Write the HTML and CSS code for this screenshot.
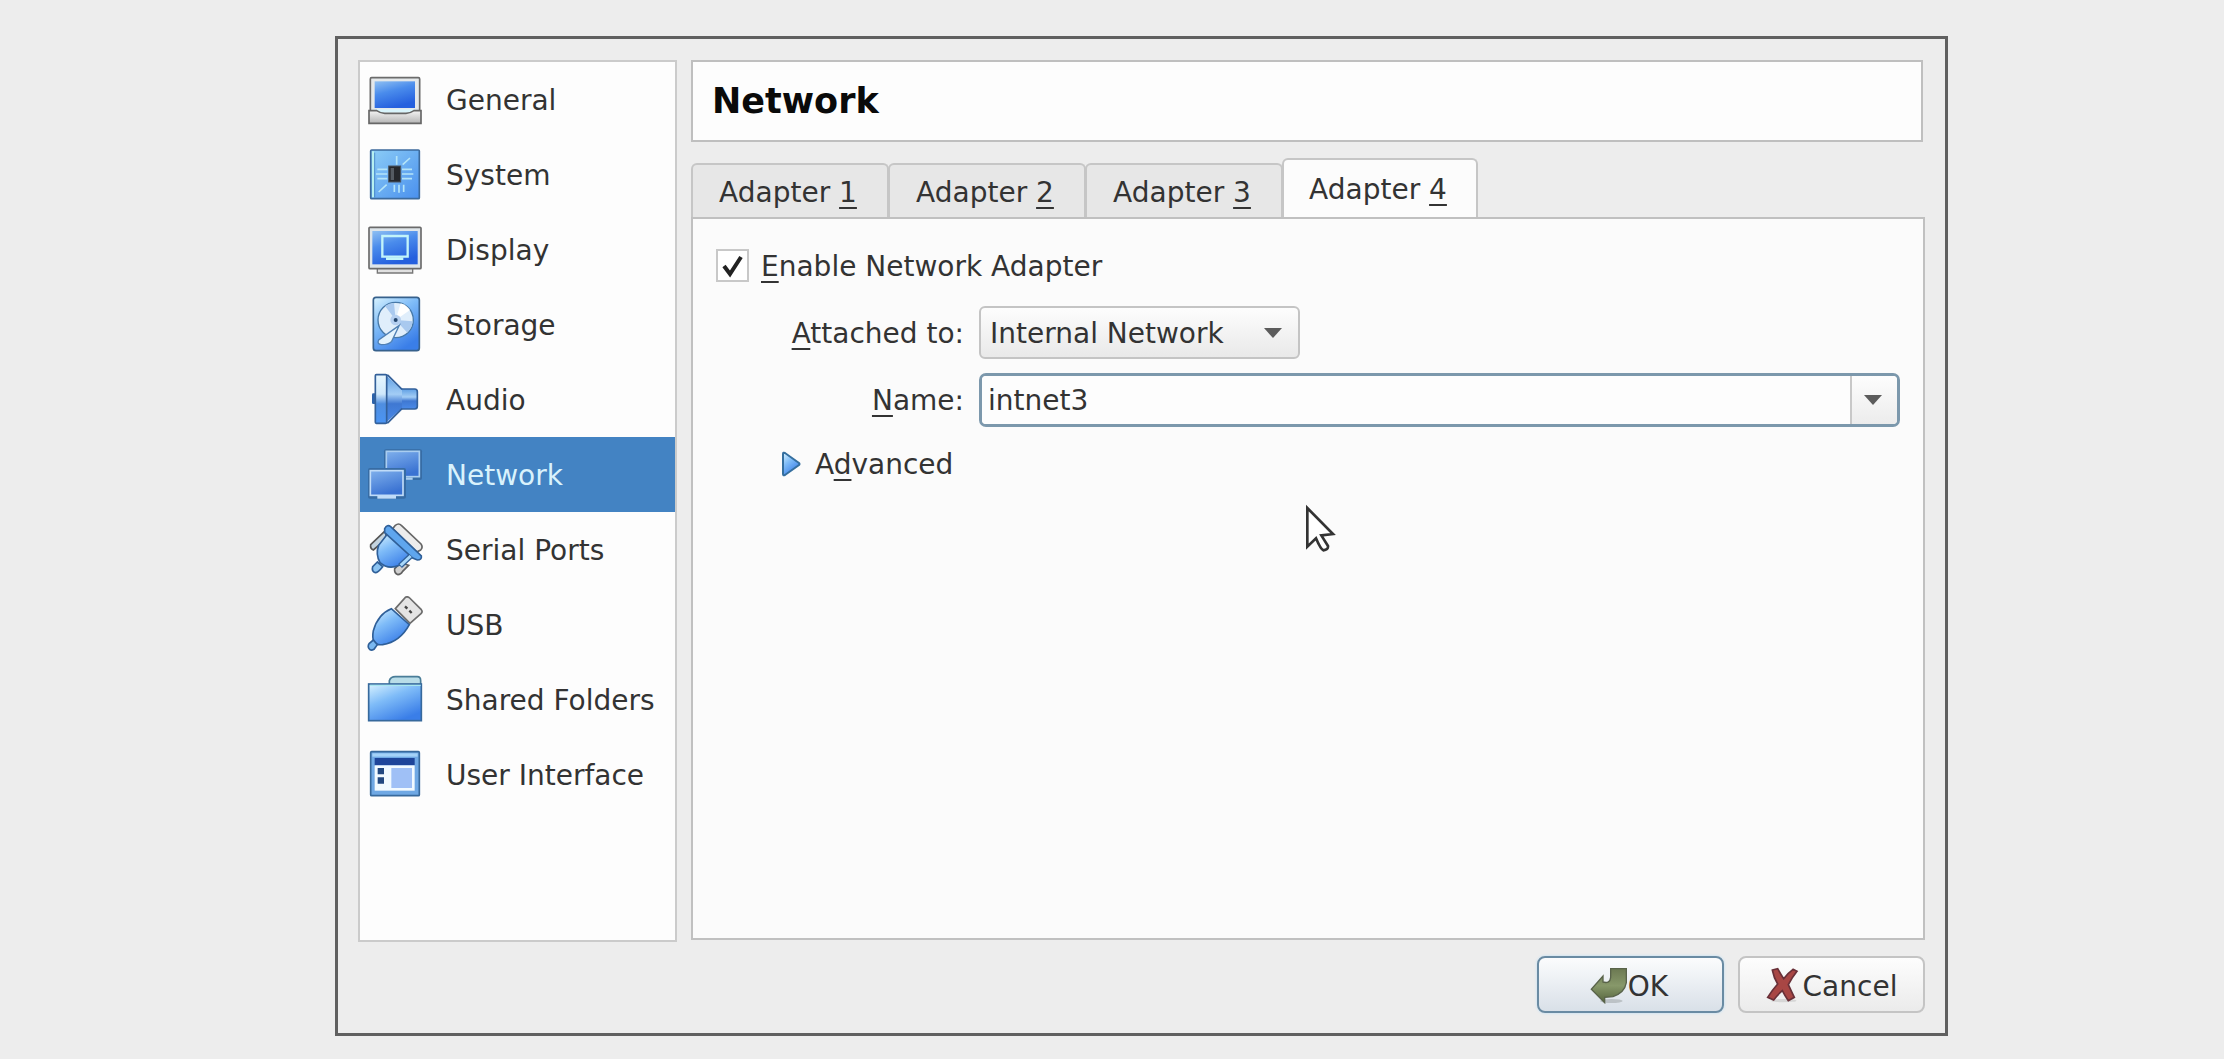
FILE: index.html
```html
<!DOCTYPE html>
<html lang="en">
<head>
<meta charset="utf-8">
<title>Network settings</title>
<link rel="stylesheet" href="styles.css">
</head>
<body>
<svg class="defs" width="0" height="0" aria-hidden="true">
  <defs>
    <linearGradient id="screen" x1="0" y1="0" x2="0.4" y2="1"><stop offset="0" stop-color="#8fc0f2"/><stop offset="0.45" stop-color="#4a8cec"/><stop offset="1" stop-color="#2560de"/></linearGradient>
    <linearGradient id="muted-screen" x1="0" y1="0" x2="0.4" y2="1"><stop offset="0" stop-color="#7fb0ec"/><stop offset="1" stop-color="#3a72d2"/></linearGradient>
    <linearGradient id="sky" x1="0" y1="0" x2="0.6" y2="1"><stop offset="0" stop-color="#d9f3ff"/><stop offset="0.45" stop-color="#7fbcf8"/><stop offset="1" stop-color="#3a7ee8"/></linearGradient>
    <linearGradient id="board" x1="0" y1="0" x2="1" y2="1"><stop offset="0" stop-color="#8ccdf6"/><stop offset="1" stop-color="#4a90ee"/></linearGradient>
    <linearGradient id="cone" x1="0" y1="0" x2="0" y2="1"><stop offset="0" stop-color="#5f9fe4"/><stop offset="0.4" stop-color="#a3cdf5"/><stop offset="0.6" stop-color="#3f78d2"/><stop offset="1" stop-color="#4a8ae8"/></linearGradient>
    <linearGradient id="rim" x1="0" y1="0" x2="0" y2="1"><stop offset="0" stop-color="#e8f7ff"/><stop offset="0.4" stop-color="#cfe8fb"/><stop offset="0.6" stop-color="#4f8ee0"/><stop offset="1" stop-color="#4a94f4"/></linearGradient>
    <linearGradient id="metal" x1="0" y1="0" x2="0" y2="1"><stop offset="0" stop-color="#f4f4f4"/><stop offset="1" stop-color="#b4b4b4"/></linearGradient>
    <linearGradient id="green" x1="0" y1="0" x2="0" y2="1"><stop offset="0" stop-color="#6c7952"/><stop offset="0.5" stop-color="#87986a"/><stop offset="1" stop-color="#55643c"/></linearGradient>
  </defs>
</svg>
<main class="dialog">
  <div class="content">
    <nav class="sidebar" aria-label="Categories">
      <a class="item" href="#general"><svg class="icon" viewBox="141 151 168 168"><path d="M155 171H295Q299 171 299 175V271H151V175Q151 171 155 171Z" fill="#e4e8ea" stroke="#6b6b6b" stroke-width="5"/><rect x="164" y="182" width="121" height="80" fill="url(#screen)"/><path d="M160 266H290L270 276H180Z" fill="#d8f4fb"/><path d="M147 270H170Q182 278 194 278H258Q270 278 282 270H303V308H147Z" fill="url(#metal)" stroke="#666" stroke-width="5"/></svg><span>General</span></a>
      <a class="item" href="#system"><svg class="icon" viewBox="141 376 168 168"><rect x="152" y="388" width="146" height="146" rx="3" fill="url(#board)" stroke="#3c6a9c" stroke-width="5"/><path d="M159 392V530" stroke="#b6f0f0" stroke-width="6"/><path d="M164 396V530" stroke="#3a78b8" stroke-width="2"/><g stroke="#b4e4f8" stroke-width="5"><path d="M172 446H202M168 460H202M172 474H202M246 446H276M246 460H280M246 474H276M230 406V432M248 432L270 412M176 514L200 492M223 492V514M237 492V516M251 492V514"/></g><rect x="206" y="436" width="36" height="48" fill="#26282c" stroke="#4a5764" stroke-width="3"/><path d="M212 442H222V478H212Z" fill="#555b62"/></svg><span>System</span></a>
      <a class="item" href="#display"><svg class="icon" viewBox="141 601 168 168"><path d="M172 742H278V757H172Z" fill="#e0e0e0" stroke="#777" stroke-width="4"/><rect x="147" y="620" width="156" height="124" rx="3" fill="#dfe6ea" stroke="#6b6b6b" stroke-width="5"/><rect x="157" y="631" width="136" height="100" fill="url(#screen)"/><path d="M187 646H263V708H187Z" fill="none" stroke="#c2f4fa" stroke-width="7"/><path d="M198 714H250" stroke="#c2f4fa" stroke-width="8"/></svg><span>Display</span></a>
      <a class="item" href="#storage"><svg class="icon" viewBox="141 46 168 168"><rect x="160" y="50" width="138" height="160" rx="8" fill="url(#sky)" stroke="#37618c" stroke-width="5"/><circle cx="227" cy="118" r="53" fill="#e0eefb" stroke="#4779a8" stroke-width="4"/><path d="M227 118L195 76A53 53 0 0 1 222 67ZM227 118L262 156A53 53 0 0 0 278 122Z" fill="#a9c9ef"/><path d="M227 118L242 68A53 53 0 0 1 270 88Z" fill="#fff"/><circle cx="227" cy="118" r="16" fill="#b5cff0"/><circle cx="227" cy="118" r="6" fill="#24466e"/><path d="M238 134L215 182Q207 192 184 192Q170 190 176 178Z" fill="#e4f3fd" stroke="#5080b4" stroke-width="4"/></svg><span>Storage</span></a>
      <a class="item" href="#audio"><svg class="icon" viewBox="141 271 168 168"><rect x="156" y="338" width="12" height="32" rx="4" fill="#2c62aa"/><rect x="236" y="325" width="56" height="60" rx="8" fill="url(#cone)" stroke="#33609a" stroke-width="5"/><path d="M198 284L246 328V382L198 426Z" fill="url(#cone)"/><path d="M198 284H204L246 326M198 426H204L246 384" fill="none" stroke="#33609a" stroke-width="5"/><rect x="166" y="282" width="34" height="146" rx="3" fill="url(#rim)" stroke="#33609a" stroke-width="5"/></svg><span>Audio</span></a>
      <a class="item selected" href="#network" aria-current="page"><svg class="icon" viewBox="141 496 168 168"><rect x="192" y="506" width="114" height="92" rx="6" fill="#376ca4"/><rect x="199" y="512" width="99" height="76" fill="url(#muted-screen)" stroke="#a9cdf0" stroke-width="5"/><path d="M238 594H278" stroke="#a9cdf0" stroke-width="7"/><rect x="144" y="562" width="114" height="92" rx="6" fill="#376ca4"/><rect x="151" y="570" width="98" height="74" fill="url(#muted-screen)" stroke="#c0dcf8" stroke-width="5"/><path d="M172 650H228" stroke="#c0dcf8" stroke-width="8"/></svg><span>Network</span></a>
      <a class="item" href="#serial"><svg class="icon" viewBox="141 -59 168 168"><path d="M226 -46Q236 -54 244 -46L303 10Q310 20 302 28L290 34L218 -36Z" fill="#ececec" stroke="#666" stroke-width="5"/><path d="M196 -30L152 12Q150 24 160 28L200 -6Z" fill="#c4d4e0" stroke="#555" stroke-width="5"/><path d="M242 66L224 84Q222 98 234 102Q242 102 248 92L266 74Z" fill="#d0d0d0" stroke="#606060" stroke-width="5"/><path d="M204 -22L176 14Q166 40 180 66Q204 88 238 74L284 40Z" fill="url(#sky)" stroke="#2f5f98" stroke-width="5"/><path d="M172 64L158 78Q154 92 166 96Q174 96 188 78Z" fill="#8cc4f2" stroke="#2f5f98" stroke-width="5"/><path d="M194 -36Q202 -50 212 -42L304 46Q306 58 292 58L278 52L194 -24Z" fill="#5fa6ee" stroke="#2f5f98" stroke-width="5"/><path d="M240 76L272 46" stroke="#2f5f98" stroke-width="17"/><path d="M242 74L272 46" stroke="#a9d8fa" stroke-width="9"/></svg><span>Serial Ports</span></a>
      <a class="item" href="#usb"><svg class="icon" viewBox="141 166 168 168"><path d="M226 204L256 170Q263 166 269 172L304 207Q309 213 303 219L270 248Z" fill="#e4e4e4" stroke="#6c6c6c" stroke-width="5"/><path d="M255 197L262 204M268 210L275 217" stroke="#444" stroke-width="7"/><path d="M214 204Q174 220 160 270Q156 292 162 304Q168 314 188 312Q240 304 268 252Z" fill="url(#sky)" stroke="#2f5f98" stroke-width="5"/><path d="M148 308L160 298L172 312L162 326Q152 332 147 324Q142 316 148 308Z" fill="#7ab8f0" stroke="#2f5f98" stroke-width="5"/></svg><span>USB</span></a>
      <a class="item" href="#folders"><svg class="icon" viewBox="141 391 168 168"><path d="M208 434V420Q212 408 226 408H292Q302 408 302 420V440H208Z" fill="#b9dde8" stroke="#4a7d98" stroke-width="5"/><rect x="146" y="430" width="158" height="110" fill="url(#sky)" stroke="#37699c" stroke-width="5"/><path d="M150 434H302" stroke="#a8e6ee" stroke-width="4"/></svg><span>Shared Folders</span></a>
      <a class="item" href="#ui"><svg class="icon" viewBox="141 616 168 168"><rect x="152" y="633" width="146" height="132" rx="3" fill="#6fa8e4" stroke="#37699c" stroke-width="5"/><rect x="157" y="638" width="136" height="10" fill="#a4d2f8"/><rect x="164" y="652" width="120" height="22" fill="#1e459a"/><rect x="164" y="674" width="120" height="76" fill="#f2faff"/><path d="M173 682H192V701H173ZM173 710H192V729H173Z" fill="#224880"/><rect x="214" y="682" width="62" height="60" fill="#9fc0f6"/></svg><span>User Interface</span></a>
    </nav>
    <section class="page">
      <h1 class="title">Network</h1>
      <div class="tabs" role="tablist">
        <button class="tab" role="tab" type="button">Adapter <u>1</u></button>
        <button class="tab" role="tab" type="button">Adapter <u>2</u></button>
        <button class="tab" role="tab" type="button">Adapter <u>3</u></button>
        <button class="tab active" role="tab" type="button" aria-selected="true">Adapter <u>4</u></button>
      </div>
      <form class="panel" id="settings">
        <div class="enable">
          <input class="check" type="checkbox" id="enable" checked>
          <label for="enable"><u>E</u>nable Network Adapter</label>
        </div>
        <div class="fields">
          <label for="attached"><u>A</u>ttached to:</label>
          <div class="select-box">
            <select class="select" id="attached"><option>Internal Network</option></select>
            <svg class="arrow select-arrow" viewBox="0 0 18 10"><path d="M0 0H18L9 10Z"/></svg>
          </div>
          <label for="name"><u>N</u>ame:</label>
          <div class="combo">
            <input class="combo-input" id="name" type="text" value="intnet3">
            <button class="combo-button" type="button" aria-label="Show names"><svg class="arrow" viewBox="0 0 18 10"><path d="M0 0H18L9 10Z"/></svg></button>
          </div>
        </div>
        <button class="advanced" type="button"><svg class="triangle" viewBox="0 0 20 26"><path d="M2 3Q2 1 4 2L18 12Q19 13 18 14L4 24Q2 25 2 23Z" fill="url(#sky)" stroke="#356f9f" stroke-width="2"/></svg><span>A<u>d</u>vanced</span></button>
        <svg class="cursor" viewBox="554 642 99 150"><path d="M564 654L641 732L606 736L626 768Q627 780 612 781Q604 778 590 745L564 770Z" fill="#fff" stroke="#333" stroke-width="8"/></svg>
      </form>
    </section>
  </div>
  <footer class="actions">
    <button class="action primary" type="submit" form="settings"><svg class="ok-icon" viewBox="266 192 114 114"><ellipse cx="330" cy="297" rx="34" ry="6" fill="#bcc2c6"/><path d="M328 200H375V242Q370 272 335 284L310 286V302L270 262L305 222V240Q326 246 328 226Z" fill="url(#green)" stroke="#59634a" stroke-width="4"/></svg><span>OK</span></button>
    <button class="action" type="button"><svg class="cancel-icon" viewBox="797 198 99 114"><ellipse cx="850" cy="302" rx="38" ry="5" fill="#d6d6d6"/><path d="M816 210L832 206Q842 224 850 236Q864 218 878 208L890 214Q874 234 864 254Q874 276 882 292L864 302Q854 288 846 272Q832 284 820 300L802 292Q816 270 832 252Q820 232 816 210Z" fill="#a84644" stroke="#693038" stroke-width="5"/></svg><span>Cancel</span></button>
  </footer>
</main>
</body>
</html>
```
FILE: styles.css
```css
* { box-sizing: border-box; }

body {
  margin: 0;
  min-height: 100vh;
  padding: 36px 276px 23px 335px;
  display: flex;
  background: #ededed;
  color: #333;
  font: 28px/36px "DejaVu Sans", sans-serif;
}

button, input, select { font: inherit; color: inherit; margin: 0; }
button { border: 0; background: none; padding: 0; }

u {
  text-decoration-thickness: 2px;
  text-underline-offset: 5px;
  text-decoration-skip-ink: none;
}

.defs { position: absolute; }

.dialog {
  flex: 1;
  display: flex;
  flex-direction: column;
  gap: 14px;
  padding: 21px 20px 20px;
  border: 3px solid #606060;
}

.content {
  flex: 1;
  display: grid;
  grid-template-columns: 319px 1fr;
  gap: 14px;
}

.sidebar {
  border: 2px solid #cbcbcb;
  background: #fdfdfd;
}

.item {
  display: flex;
  align-items: center;
  gap: 23px;
  height: 75px;
  padding: 0 0 2px 7px;
  color: inherit;
  text-decoration: none;
  white-space: nowrap;
}

.item span { padding-top: 4px; }
.item.selected { background: #4383c3; color: #d9f2fc; }
.icon { width: 56px; height: 56px; }

.page {
  display: flex;
  flex-direction: column;
  padding-bottom: 2px;
}

.title {
  margin: 0 2px 16px 0;
  padding: 0 19px;
  border: 2px solid #bfbfbf;
  background: #fdfdfd;
  color: #0a0a0a;
  font-size: 35px;
  line-height: 78px;
}

.tabs {
  display: flex;
  align-items: flex-end;
  height: 59px;
}

.tab {
  width: 198px;
  height: 54px;
  margin-right: -1px;
  padding: 4px 4px 0 0;
  border: 2px solid #c6c6c6;
  border-bottom: 0;
  border-radius: 6px 6px 0 0;
  background: #e7e7e7;
}

.tab.active {
  position: relative;
  width: 196px;
  height: 61px;
  margin-bottom: -2px;
  padding-top: 0;
  background: #fcfcfc;
}

.panel {
  position: relative;
  flex: 1;
  padding: 30px 23px;
  border: 2px solid #c0c0c0;
  background: #fbfbfb;
}

.enable {
  display: flex;
  align-items: center;
  gap: 12px;
  height: 33px;
  margin-bottom: 24px;
}

.enable label { padding-top: 2px; }

.check {
  appearance: none;
  width: 33px;
  height: 33px;
  border: 2px solid #c8c8c8;
  background: #fff;
}

.check:checked {
  background: #fff url("data:image/svg+xml,%3Csvg xmlns='http://www.w3.org/2000/svg' viewBox='0 0 29 29'%3E%3Cpath d='M6 15L12 23L23 6' fill='none' stroke='%23222' stroke-width='4'/%3E%3C/svg%3E");
}

.fields {
  display: grid;
  grid-template-columns: 248px 1fr;
  align-items: center;
  gap: 14px 15px;
  margin-bottom: 18px;
}

.fields label { padding-top: 2px; text-align: right; }

.select-box {
  position: relative;
  width: 321px;
}

.select {
  appearance: none;
  display: block;
  width: 100%;
  height: 53px;
  padding: 2px 9px 0;
  border: 2px solid #c4c4c4;
  border-radius: 6px;
  background: linear-gradient(#fdfdfd, #e9e9e9);
}

.arrow { width: 18px; height: 10px; fill: #5c5c5c; }
.select-arrow { position: absolute; right: 18px; top: 22px; }

.combo {
  display: flex;
  height: 54px;
  border: 3px solid #7c98ac;
  border-radius: 7px;
  overflow: hidden;
}

.combo-input {
  flex: 1;
  min-width: 0;
  padding: 2px 6px 0;
  border: 0;
  outline: 0;
  background: #fdfdfd;
}

.combo-button {
  display: flex;
  align-items: center;
  justify-content: center;
  width: 47px;
  padding-right: 4px;
  border-left: 2px solid #c8c8c8;
  background: linear-gradient(#fdfdfd, #ececec);
}

.advanced {
  display: flex;
  align-items: center;
  gap: 14px;
  margin-left: 65px;
}

.advanced span { padding-top: 2px; }
.triangle { width: 20px; height: 26px; }

.cursor {
  position: absolute;
  left: 611px;
  top: 285px;
  width: 33px;
  height: 50px;
}

.actions {
  display: flex;
  justify-content: flex-end;
  gap: 14px;
}

.action {
  display: flex;
  align-items: center;
  justify-content: center;
  width: 187px;
  height: 57px;
  border: 2px solid #c4c4c4;
  border-radius: 8px;
  background: linear-gradient(#fdfdfd, #ebebeb);
}

.action span { padding-top: 4px; }

.action.primary {
  padding-right: 3px;
  border-color: #6a8ba3;
  background: linear-gradient(#fbfcfd, #d9e0e8);
  box-shadow: 0 0 2px 1px #d4e6f2;
}

.ok-icon { width: 38px; height: 38px; }
.cancel-icon { width: 33px; height: 38px; margin-right: 4px; }
```
